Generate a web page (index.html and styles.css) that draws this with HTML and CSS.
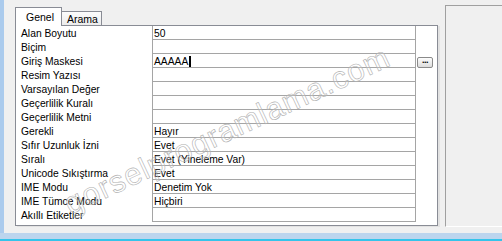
FILE: index.html
```html
<!DOCTYPE html>
<html lang="tr">
<head>
  <meta charset="UTF-8">
  <title>Alan Özellikleri</title>
  <link rel="stylesheet" href="styles.css">
</head>
<body>
  <div class="screen">
    <div class="workspace">
      <div class="props">
        <div class="tabs">
          <div class="tab active">Genel</div>
          <div class="tab">Arama</div>
        </div>
        <div class="panel">
          <div class="grid">
            <div class="label">Alan Boyutu</div><div class="value">50</div><div class="extra"></div>
            <div class="label">Biçim</div><div class="value"></div><div class="extra"></div>
            <div class="label">Giriş Maskesi</div><div class="value">AAAAA<span class="caret"></span></div><div class="extra"><span class="btn-build">...</span></div>
            <div class="label">Resim Yazısı</div><div class="value"></div><div class="extra"></div>
            <div class="label">Varsayılan Değer</div><div class="value"></div><div class="extra"></div>
            <div class="label">Geçerlilik Kuralı</div><div class="value"></div><div class="extra"></div>
            <div class="label">Geçerlilik Metni</div><div class="value"></div><div class="extra"></div>
            <div class="label">Gerekli</div><div class="value">Hayır</div><div class="extra"></div>
            <div class="label">Sıfır Uzunluk İzni</div><div class="value">Evet</div><div class="extra"></div>
            <div class="label">Sıralı</div><div class="value">Evet (Yineleme Var)</div><div class="extra"></div>
            <div class="label">Unicode Sıkıştırma</div><div class="value">Evet</div><div class="extra"></div>
            <div class="label">IME Modu</div><div class="value">Denetim Yok</div><div class="extra"></div>
            <div class="label">IME Tümce Modu</div><div class="value">Hiçbiri</div><div class="extra"></div>
            <div class="label">Akıllı Etiketler</div><div class="value"></div><div class="extra"></div>
          </div>
        </div>
      </div>
      <div class="side"></div>
    </div>
    <div class="taskbar"></div>
    <div class="watermark">gorselprogramlama.com</div>
  </div>
</body>
</html>
```

FILE: styles.css
```css
body {
  margin: 0;
  font-family: "Liberation Sans", Arial, sans-serif;
  font-size: 10.3px;
  color: #000;
  background-color: #f0f0f0;
  overflow: hidden;
}
.screen {
  position: relative;
  width: 502px;
  height: 241px;
  overflow: hidden;
}
.workspace {
  display: flex;
  height: 233px;
  box-sizing: border-box;
  border-left: 4px solid #abcbed;
  padding-left: 1px;
  background-color: #f0f0f0;
}
.props {
  padding: 7px 0 0 10px;
}
.tabs {
  display: flex;
  align-items: flex-end;
  height: 18px;
}
.tab {
  box-sizing: border-box;
  height: 14px;
  width: 40px;
  padding: 1px 0 0 5px;
  border: 1px solid #898c95;
  border-bottom: none;
  border-left: none;
  background: linear-gradient(#fcfcfc, #ececec);
  line-height: 12px;
  font-size: 10.5px;
}
.tab.active {
  position: relative;
  z-index: 1;
  width: 47px;
  height: 19px;
  margin-bottom: -1px;
  padding: 3px 0 0 10px;
  border-left: 1px solid #898c95;
  background: #fff;
  line-height: 12px;
}
.panel {
  width: 423px;
  box-sizing: border-box;
  border: 1px solid #898c95;
  background-color: #fff;
  padding-bottom: 3px;
  box-shadow: 2px 1px 0 #e2e2e2;
}
.grid {
  display: grid;
  grid-template-columns: 136px 264px 21px;
  grid-auto-rows: 14px;
}
.label {
  padding-left: 5px;
  line-height: 15px;
  white-space: nowrap;
}
.value {
  box-sizing: border-box;
  border-left: 1px solid #a5a5a5;
  border-right: 1px solid #a5a5a5;
  border-bottom: 1px solid #a5a5a5;
  padding-left: 1px;
  line-height: 15px;
  white-space: nowrap;
}
.caret {
  display: inline-block;
  width: 2px;
  height: 11px;
  margin-left: 1px;
  vertical-align: -2px;
  background-color: #000;
}
.extra {
  display: flex;
  align-items: center;
}
.btn-build {
  box-sizing: border-box;
  width: 16px;
  height: 11px;
  margin: 2px 0 0 1px;
  border: 1px solid #8a8a8a;
  border-radius: 2px;
  background: linear-gradient(#fdfdfd, #dcdcdc);
  font-weight: bold;
  font-size: 9px;
  line-height: 4px;
  text-align: center;
  letter-spacing: -0.5px;
}
.side {
  flex: 1;
  margin: 5px 0 6px 7px;
  border-top: 1px solid #a0a0a0;
  border-left: 1px solid #a0a0a0;
  border-bottom: 1px solid #fff;
  background-color: #f0f0f0;
}
.taskbar {
  height: 6px;
  background-color: #bcd5ee;
  border-bottom: 2px solid #35c4ea;
}
.watermark {
  position: absolute;
  left: 74px;
  top: 186px;
  transform: rotate(-25deg);
  transform-origin: left bottom;
  font-family: "Liberation Sans", Arial, sans-serif;
  font-size: 31px;
  letter-spacing: 1px;
  color: rgba(255, 255, 255, 0.2);
  -webkit-text-stroke: 0.6px #b0b0b0;
  white-space: nowrap;
  pointer-events: none;
}
```
